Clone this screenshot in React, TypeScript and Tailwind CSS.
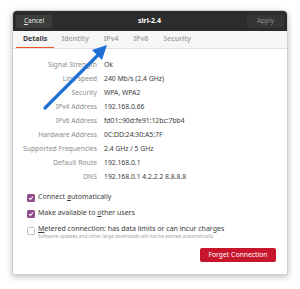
import React from 'react';

const rows: [string, string][] = [
  ['Signal Strength', 'Ok'],
  ['Link speed', '240 Mb/s (2.4 GHz)'],
  ['Security', 'WPA, WPA2'],
  ['IPv4 Address', '192.168.0.66'],
  ['IPv6 Address', 'fd01::90d:fe91:12bc:7bb4'],
  ['Hardware Address', '0C:DD:24:30:A5:7F'],
  ['Supported Frequencies', '2.4 GHz / 5 GHz'],
  ['Default Route', '192.168.0.1'],
  ['DNS', '192.168.0.1 4.2.2.2 8.8.8.8'],
];

const tabs = ['Details', 'Identity', 'IPv4', 'IPv6', 'Security'];

const Check = ({ on }: { on: boolean }) =>
  on ? (
    <span className="shrink-0 w-[8px] h-[8px] rounded-[1.5px] bg-[#924d8b] flex items-center justify-center">
      <svg width="6" height="6" viewBox="0 0 6 6">
        <path d="M1 3.1 L2.4 4.5 L5 1.5" fill="none" stroke="#fff" strokeWidth="1.1" />
      </svg>
    </span>
  ) : (
    <span className="shrink-0 block w-[8px] h-[8px] rounded-[1.5px] border border-[#bdbdbd] bg-white" />
  );

const App: React.FC = () => {
  return (
    <div
      className="relative w-[300px] h-[289px] bg-white pt-[10px] px-[12px]"
      style={{ fontFamily: '"Noto Sans", "Open Sans", sans-serif' }}
    >
      <div className="w-[276px] h-[265px] rounded-t-[5px] border border-[#cfcfcf] shadow-[0_2px_6px_rgba(0,0,0,0.25)] flex flex-col overflow-hidden">
        {/* header bar */}
        <div className="h-[20px] bg-[#2c2c2c] flex items-center justify-between px-[3px]">
          <div className="w-[36px] h-[13px] rounded-[2px] bg-[#3c3c3c] text-[#e6e6e6] text-[6.5px] flex items-center justify-center">
            <span><span className="underline">C</span>ancel</span>
          </div>
          <div className="text-white text-[7px] font-bold">siri-2.4</div>
          <div className="w-[37px] h-[13px] rounded-[2px] bg-[#353535] text-[#8b8b8b] text-[6.5px] flex items-center justify-center">
            Apply
          </div>
        </div>

        {/* tabs */}
        <div className="h-[18px] bg-[#f6f6f6] border-b border-[#e0e0e0] flex pl-[3px]">
          {tabs.map((t, i) => (
            <div
              key={t}
              className={
                i === 0
                  ? 'px-[7px] flex items-center text-[7px] font-bold text-[#3a3a3a] border-b-[1.5px] border-[#e95420]'
                  : 'px-[7.5px] flex items-center text-[7px] font-semibold text-[#a3a3a3]'
              }
            >
              {t}
            </div>
          ))}
        </div>

        {/* content */}
        <div className="flex-1 bg-white flex flex-col pt-[9px]">
          <div className="grid grid-cols-[84px_1fr] gap-x-[7px]">
            {rows.map(([k, v]) => (
              <React.Fragment key={k}>
                <div className="h-[14px] flex items-center justify-end text-[6.8px] text-[#8c8c8c]">{k}</div>
                <div className="h-[14px] flex items-center text-[6.8px] text-[#3c3c3c]">{v}</div>
              </React.Fragment>
            ))}
          </div>

          <div className="flex flex-col pl-[14px] mt-[9px] gap-[7px]">
            <div className="h-[9px] flex items-center gap-[3px] text-[7px] text-[#3c3c3c]">
              <Check on />
              <span>Connect <span className="underline">a</span>utomatically</span>
            </div>
            <div className="h-[9px] flex items-center gap-[3px] text-[7px] text-[#3c3c3c]">
              <Check on />
              <span>Make available to <span className="underline">o</span>ther users</span>
            </div>
            <div className="flex items-start gap-[3px]">
              <div className="mt-[2px]"><Check on={false} /></div>
              <div className="flex flex-col">
                <span className="text-[7px] leading-[8px] text-[#3c3c3c]"><span className="underline">M</span>etered connection: has data limits or can incur charges</span>
                <span className="text-[4.8px] leading-[7px] text-[#a5a5a5]">Software updates and other large downloads will not be started automatically.</span>
              </div>
            </div>
          </div>

          <div className="flex justify-end pr-[11px] mt-[8px]">
            <div className="w-[76px] h-[14px] rounded-[2px] bg-[#c7162b] text-white text-[6.8px] flex items-center justify-center">
              Forget Connection
            </div>
          </div>
        </div>
      </div>

      {/* annotation arrow */}
      <svg className="absolute left-0 top-0" width="300" height="289" viewBox="0 0 300 289">
        <line x1="45" y1="108" x2="99" y2="54" stroke="#1d6fd6" strokeWidth="3.2" strokeLinecap="round" />
        <polygon points="107,45 92,50 102,60" fill="#1d6fd6" />
      </svg>
    </div>
  );
};

export default App;
